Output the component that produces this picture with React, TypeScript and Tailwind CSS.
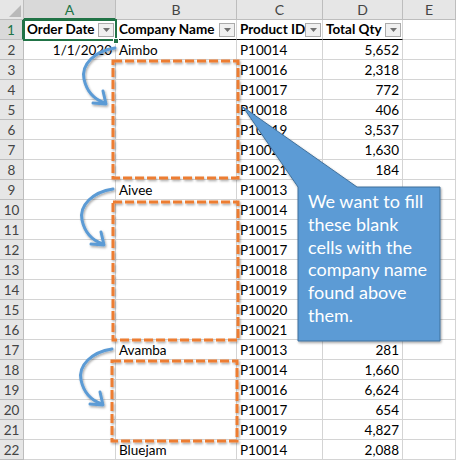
import React from "react";

const cols = ["A", "B", "C", "D", "E"];
const heads = ["Order Date", "Company Name", "Product ID", "Total Qty"];

const data: [string, string, string, string][] = [
  ["1/1/2020", "Aimbo", "P10014", "5,652"],
  ["", "", "P10016", "2,318"],
  ["", "", "P10017", "772"],
  ["", "", "P10018", "406"],
  ["", "", "P10019", "3,537"],
  ["", "", "P10020", "1,630"],
  ["", "", "P10021", "184"],
  ["", "Aivee", "P10013", ""],
  ["", "", "P10014", ""],
  ["", "", "P10015", ""],
  ["", "", "P10017", ""],
  ["", "", "P10018", ""],
  ["", "", "P10019", ""],
  ["", "", "P10020", ""],
  ["", "", "P10021", ""],
  ["", "Avamba", "P10013", "281"],
  ["", "", "P10014", "1,660"],
  ["", "", "P10016", "6,624"],
  ["", "", "P10017", "654"],
  ["", "", "P10019", "4,827"],
  ["", "Bluejam", "P10014", "2,088"],
];

const cell = "h-5 border-r border-b border-[#d4d4d4] leading-5 px-[3px] whitespace-nowrap overflow-hidden";
const rowHead = "h-5 bg-[#e6e6e6] border-r border-b border-[#bdbdbd] text-center leading-5 text-[#444]";

function FilterBtn() {
  return (
    <span className="ml-auto flex h-[14px] w-[16px] shrink-0 items-center justify-center border border-[#ababab] bg-[#f0f0f0]">
      <svg width="7" height="4" viewBox="0 0 7 4">
        <path d="M0 0h7L3.5 4z" fill="#707070" />
      </svg>
    </span>
  );
}

function Arrow({ dx, dy }: { dx: number; dy: number }) {
  return (
    <g transform={`translate(${dx} ${dy})`} stroke="#5b9bd5" strokeWidth="3" fill="none" strokeLinecap="round" strokeLinejoin="round" filter="url(#sh)">
      <path d="M115 48 C 95 51 81 64 84 79 C 87 93 96 100 105 103" />
      <path d="M93 103 L106 104 L103 91" />
    </g>
  );
}

export default function App() {
  return (
    <div className="relative h-[461px] w-[456px] overflow-hidden bg-white font-[Lato,sans-serif] text-[13.5px] text-black">
      <div className="grid grid-cols-[24px_92px_121px_86px_80px_53px]">
        <div className="relative h-5 border-r border-b border-[#bdbdbd] bg-[#e6e6e6]">
          <svg className="absolute right-[2px] bottom-[2px]" width="12" height="12" viewBox="0 0 12 12">
            <path d="M12 0V12H0z" fill="#b9b9b9" />
          </svg>
        </div>
        {cols.map((c, i) => (
          <div
            key={c}
            className={
              i === 0
                ? "h-5 bg-[#d9d9d9] border-r border-b-2 border-r-[#bdbdbd] border-b-[#217346] text-center leading-5 text-[14px] text-[#217346]"
                : "h-5 bg-[#e6e6e6] border-r border-b border-[#bdbdbd] text-center leading-5 text-[14px] text-[#444]"
            }
          >
            {c}
          </div>
        ))}

        <div className="h-5 bg-[#d9d9d9] border-r-2 border-b border-r-[#217346] border-b-[#bdbdbd] text-center leading-5 text-[#217346]">1</div>
        {heads.map((h) => (
          <div key={h} className="flex h-5 items-center border-r border-b border-r-[#d4d4d4] border-b-black pl-[3px] pr-[1px] font-bold whitespace-nowrap">
            <span>{h}</span>
            <FilterBtn />
          </div>
        ))}
        <div className={cell}></div>

        {data.map((r, i) => (
          <React.Fragment key={i}>
            <div className={rowHead}>{i + 2}</div>
            <div className={cell + " text-right"}>{r[0]}</div>
            <div className={cell}>{r[1]}</div>
            <div className={cell}>{r[2]}</div>
            <div className={cell + " text-right"}>{r[3]}</div>
            <div className={cell}></div>
          </React.Fragment>
        ))}
      </div>

      {/* selected cell A1 */}
      <div className="absolute left-[23px] top-[19px] h-[22px] w-[94px] border-2 border-[#217346]" />
      <div className="absolute left-[113px] top-[38px] h-[6px] w-[6px] border border-white bg-[#217346]" />

      <svg className="pointer-events-none absolute inset-0" width="456" height="461" viewBox="0 0 456 461">
        <defs>
          <filter id="sh" x="-20%" y="-20%" width="140%" height="140%">
            <feDropShadow dx="1" dy="1.5" stdDeviation="1.2" floodColor="#000" floodOpacity="0.35" />
          </filter>
        </defs>
        <g fill="none" stroke="#ed7d31" strokeWidth="3" strokeDasharray="9 3" filter="url(#sh)">
          <rect x="113" y="61" width="125" height="117" />
          <rect x="113" y="202" width="125" height="138" />
          <rect x="112" y="361" width="125" height="80" />
        </g>
        <Arrow dx={0} dy={0} />
        <Arrow dx={-2} dy={141} />
        <Arrow dx={-3} dy={301} />
        <path
          d="M298 187 L243 107 L357 187 L440 187 L440 341 L298 341 Z"
          fill="#5b9bd5"
          stroke="#41719c"
          strokeWidth="1"
          filter="url(#sh)"
        />
      </svg>

      <div className="absolute left-[298px] top-[188px] w-[142px] pl-[10px] pt-[2px] text-[18px] leading-[22.8px] text-white">
        <div>We want to fill</div>
        <div>these blank</div>
        <div>cells with the</div>
        <div>company name</div>
        <div>found above</div>
        <div>them.</div>
      </div>
    </div>
  );
}
